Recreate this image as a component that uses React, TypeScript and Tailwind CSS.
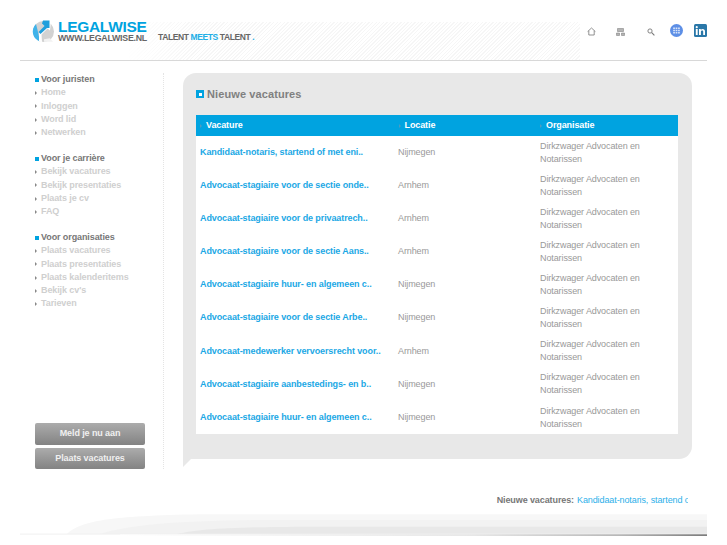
import React from "react";

const groups = [
  { title: "Voor juristen", items: ["Home", "Inloggen", "Word lid", "Netwerken"] },
  { title: "Voor je carrière", items: ["Bekijk vacatures", "Bekijk presentaties", "Plaats je cv", "FAQ"] },
  { title: "Voor organisaties", items: ["Plaats vacatures", "Plaats presentaties", "Plaats kalenderitems", "Bekijk cv's", "Tarieven"] },
];

const rows = [
  ["Kandidaat-notaris, startend of met eni..", "Nijmegen"],
  ["Advocaat-stagiaire voor de sectie onde..", "Arnhem"],
  ["Advocaat-stagiaire voor de privaatrech..", "Arnhem"],
  ["Advocaat-stagiaire voor de sectie Aans..", "Arnhem"],
  ["Advocaat-stagiaire huur- en algemeen c..", "Nijmegen"],
  ["Advocaat-stagiaire voor de sectie Arbe..", "Nijmegen"],
  ["Advocaat-medewerker vervoersrecht voor..", "Arnhem"],
  ["Advocaat-stagiaire aanbestedings- en b..", "Nijmegen"],
  ["Advocaat-stagiaire huur- en algemeen c..", "Nijmegen"],
];

function Logo() {
  return (
    <svg width="26" height="23" viewBox="0 0 26 23" className="shrink-0">
      <circle cx="11.5" cy="11.5" r="10.5" fill="#d2d2d2" />
      <path d="M4 4A10.5 10.5 0 0 0 8 21.5L6 12Z" fill="#3fb3ea" />
      <path d="M7 21.5 7 12 13 6.5 10.5 4 19 1 18 10.5 15.5 8.5 9.5 14.5 10 22Z" fill="#ffffff" />
      <path d="M6.5 12 12.5 6 10 3.5 11 0.5 17.5 .5 17.5 8 15 8 8.5 14Z" fill="#1f9fdc" />
      <path d="M12 21.8h9l-3-3.5-6 1Z" fill="#f2f2f2" />
    </svg>
  );
}

function HeaderIcons() {
  return (
    <div className="flex items-center">
      <svg width="9" height="9" viewBox="0 0 9 9" fill="none" stroke="#777" strokeWidth="0.8">
        <path d="M.6 4.6 4.5 1l3.9 3.6M1.8 3.8V8h5.4V3.8" />
      </svg>
      <svg width="9" height="8" viewBox="0 0 9 8" fill="#777" className="ml-[20px]">
        <path d="M1.5.5h6v3h-6zM.5 5h3v2.5h-3zM5.5 5h3v2.5h-3z" stroke="#777" strokeWidth="0.5" fillOpacity="0.55" />
      </svg>
      <svg width="8" height="8" viewBox="0 0 8 8" fill="none" stroke="#777" className="ml-[22px]">
        <circle cx="3" cy="3" r="2.1" strokeWidth="0.9" />
        <path d="M4.7 4.7 7.4 7.4" strokeWidth="1.1" />
      </svg>
      <svg width="13" height="13" viewBox="0 0 13 13" className="ml-[15px] -mt-[2px]">
        <circle cx="6.5" cy="6.5" r="6.5" fill="#5d8fe6" />
        <path d="M3.2 3.6h1.7V5H3.2zM5.65 3.6h1.7V5h-1.7zM8.1 3.6h1.7V5H8.1zM3.2 5.8h1.7v1.4H3.2zM5.65 5.8h1.7v1.4h-1.7zM8.1 5.8h1.7v1.4H8.1zM3.2 8h1.7v1.4H3.2zM5.65 8h1.7v1.4h-1.7zM8.1 8h1.7v1.4H8.1z" fill="#dbe6fa" />
      </svg>
      <svg width="13" height="13" viewBox="0 0 13 13" className="ml-[11px] -mt-[2px]">
        <rect width="13" height="13" rx="1.5" fill="#2a77a8" />
        <rect x="1.8" y="5" width="1.9" height="6" fill="#fff" />
        <circle cx="2.75" cy="3.2" r="1.1" fill="#fff" />
        <path d="M5 5h1.8v.9c.4-.6 1-1 1.9-1 1.5 0 2.3.9 2.3 2.6V11H9.2V7.8c0-.8-.3-1.3-1-1.3s-1.3.5-1.3 1.4V11H5Z" fill="#fff" />
      </svg>
    </div>
  );
}

export default function App() {
  return (
    <div className="w-[727px] h-[545px] overflow-hidden bg-white text-[9px] tracking-[-0.1px] text-[#888888] font-['Liberation_Sans',Arial,sans-serif]">
      <header className="mx-[20px] h-[61px] border-b border-[#d8d8d8] flex items-start relative">
        <div className="absolute left-[105px] top-[22px] w-[455px] h-[38px] bg-[repeating-linear-gradient(135deg,#f6f6f6_0px,#f6f6f6_1px,#ffffff_1px,#ffffff_2.5px)] [mask-image:linear-gradient(90deg,transparent,black_70px)]" />
        <div className="flex items-start pl-[12px] pt-[20px] relative z-10">
          <Logo />
          <div className="flex flex-col font-bold tracking-normal">
            <span className="text-[#00a3e0] text-[15.5px] leading-[13px] tracking-[-0.3px]">LEGALWISE</span>
            <span className="text-[#666666] text-[8.8px] leading-[9px] mt-[1px] tracking-[-0.24px]">WWW.LEGALWISE.NL</span>
          </div>
          <span className="ml-[11px] mt-[11px] font-bold text-[8.5px] leading-[12px] tracking-[-0.4px] text-[#666666] whitespace-nowrap">
            TALENT <span className="text-[#22aee6]">MEETS</span> TALENT <span className="text-[#22aee6]">.</span>
          </span>
        </div>
        <div className="ml-auto pt-[26px] relative z-10">
          <HeaderIcons />
        </div>
      </header>

      <div className="flex pt-[12px] pl-[35px] h-[408px]">
        <aside className="w-[129px] h-[396px] border-r border-dotted border-[#e4e4e4] pr-[18px] flex flex-col">
          <div className="flex flex-col gap-[12.5px]">
            {groups.map((g) => (
              <div key={g.title} className="flex flex-col font-bold leading-[13.3px]">
                <div className="flex items-center text-[#777777]">
                  <span className="w-[4px] h-[4px] mt-[1px] mr-[2px] bg-[#00a3e0]" />
                  {g.title}
                </div>
                {g.items.map((it) => (
                  <div key={it} className="flex items-center text-[#cfcfcf]">
                    <span className="mr-[4px] w-0 h-0 border-y-[2px] border-l-[2px] border-y-transparent border-l-[#888888]" />
                    {it}
                  </div>
                ))}
              </div>
            ))}
          </div>
          <div className="mt-auto flex flex-col gap-[3px] w-[110px]">
            {["Meld je nu aan", "Plaats vacatures"].map((t) => (
              <button
                key={t}
                className="h-[21.5px] rounded-[2px] bg-gradient-to-b from-[#acacac] to-[#838383] text-[#f0f0f0] font-bold text-center"
              >
                {t}
              </button>
            ))}
          </div>
        </aside>

        <main className="ml-[19px] w-[509px] h-[386px] bg-[#e8e8e8] rounded-[13px] rounded-bl-none pl-[13px] pr-[14px] relative">
          <h2 className="h-[42px] flex items-center text-[11px] font-bold tracking-[0.1px] text-[#808080]">
            <span className="w-[8px] h-[8px] mr-[3px] bg-[#00a3e0] flex items-center justify-center">
              <span className="w-[3px] h-[3px] bg-white" />
            </span>
            Nieuwe vacatures
          </h2>
          <div className="bg-white">
            <div className="h-[21px] bg-[#00a3e0] grid grid-cols-[198.5px_141.5px_1fr] items-center text-white font-bold pl-[4px]">
              {["Vacature", "Locatie", "Organisatie"].map((h) => (
                <div key={h} className="flex items-center">
                  <span className="mr-[4px] w-0 h-0 border-y-[2px] border-l-[2px] border-y-transparent border-l-[#4d9cc0]" />
                  {h}
                </div>
              ))}
            </div>
            {rows.map(([title, place], i) => (
              <div key={i} className="h-[33.125px] grid grid-cols-[198px_142px_1fr] items-center pl-[4px]">
                <div className="font-bold text-[#1ba8e5] whitespace-nowrap">{title}</div>
                <div className="text-[#999999]">{place}</div>
                <div className="text-[#999999] leading-[13px] w-[120px]">Dirkzwager Advocaten en Notarissen</div>
              </div>
            ))}
          </div>
          <div className="absolute left-0 -bottom-[8px] w-0 h-0 border-t-[8px] border-r-[8px] border-t-[#e8e8e8] border-r-transparent" />
        </main>
      </div>

      <div className="h-[45px] mx-[20px] -mt-[1px]">
        <div className="pt-[26px] pr-[19px] flex justify-end">
          <span className="font-bold text-[#777777] whitespace-nowrap mr-[3px]">Nieuwe vacatures:</span>
          <span className="text-[#2db0ea] w-[111px] overflow-hidden whitespace-nowrap">Kandidaat-notaris, startend of met</span>
        </div>
      </div>

      <div className="mx-[20px] h-[26px]">
        <svg width="687" height="26" viewBox="0 0 687 26" className="block">
          <defs>
            <linearGradient id="sh" x1="0" x2="1" y1="0" y2="0">
              <stop offset="0" stopColor="#ffffff" />
              <stop offset="0.6" stopColor="#dddddd" />
              <stop offset="0.85" stopColor="#999999" />
              <stop offset="1" stopColor="#444444" />
            </linearGradient>
          </defs>
          <path d="M47 21C60 8 90 3 180 1.3H687V21Z" fill="#f7f7f7" />
          <path d="M80 21C110 12 150 8 240 7H687V21Z" fill="#f2f2f2" />
          <path d="M157 21C180 16 210 14 290 13.7H687V21Z" fill="#e8e8e8" />
          <rect x="0" y="20.6" width="687" height="1" fill="#f0f0f0" />
          <rect x="100" y="21.5" width="587" height="1.2" fill="url(#sh)" />
        </svg>
      </div>
    </div>
  );
}
